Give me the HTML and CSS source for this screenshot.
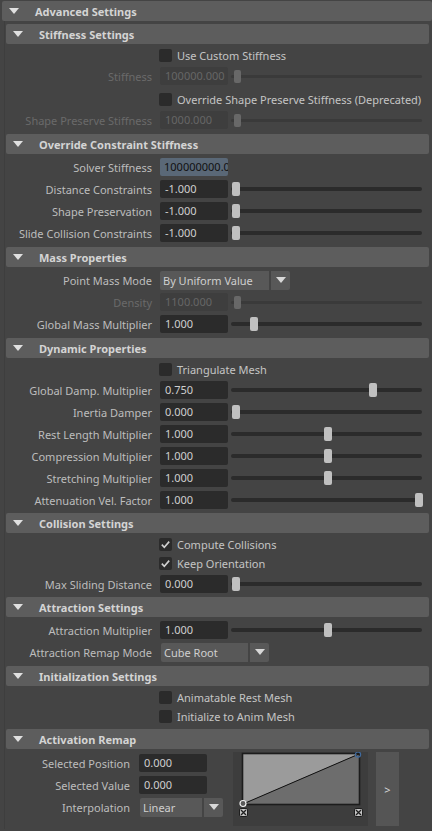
FILE: index.html
```html
<!DOCTYPE html>
<html>
<head>
<meta charset="utf-8">
<link rel="stylesheet" href="styles.css">
</head>
<body>
<div class="page">
  <div class="hdr hdr-top"><svg class="tri" width="10" height="6" viewBox="0 0 10 6"><polygon points="0,0 10,0 5,6" fill="#e0e0e0"/></svg><span>Advanced Settings</span></div>
  <div class="frame-body">

    <section class="sub">
      <div class="hdr"><svg class="tri" width="10" height="6" viewBox="0 0 10 6"><polygon points="0,0 10,0 5,6" fill="#e0e0e0"/></svg><span>Stiffness Settings</span></div>
      <div class="sub-body">
        <div class="row cb"><span class="cbox"></span><span class="cb-text">Use Custom Stiffness</span></div>
        <div class="row dis"><span class="label">Stiffness</span><span class="field">100000.000</span><div class="slider"><span class="handle" style="left:3px"></span></div></div>
        <div class="row cb gap2"><span class="cbox"></span><span class="cb-text">Override Shape Preserve Stiffness (Deprecated)</span></div>
        <div class="row dis"><span class="label">Shape Preserve Stiffness</span><span class="field">1000.000</span><div class="slider"><span class="handle" style="left:3px"></span></div></div>
      </div>
    </section>

    <section class="sub">
      <div class="hdr"><svg class="tri" width="10" height="6" viewBox="0 0 10 6"><polygon points="0,0 10,0 5,6" fill="#e0e0e0"/></svg><span>Override Constraint Stiffness</span></div>
      <div class="sub-body">
        <div class="row"><span class="label">Solver Stiffness</span><span class="field sel">100000000.0</span></div>
        <div class="row"><span class="label">Distance Constraints</span><span class="field">-1.000</span><div class="slider"><span class="handle" style="left:1px"></span></div></div>
        <div class="row"><span class="label">Shape Preservation</span><span class="field">-1.000</span><div class="slider"><span class="handle" style="left:1px"></span></div></div>
        <div class="row"><span class="label">Slide Collision Constraints</span><span class="field">-1.000</span><div class="slider"><span class="handle" style="left:1px"></span></div></div>
      </div>
    </section>

    <section class="sub">
      <div class="hdr"><svg class="tri" width="10" height="6" viewBox="0 0 10 6"><polygon points="0,0 10,0 5,6" fill="#e0e0e0"/></svg><span>Mass Properties</span></div>
      <div class="sub-body">
        <div class="row"><span class="label">Point Mass Mode</span><span class="drop w109">By Uniform Value</span><span class="drop-btn"><svg width="10" height="6" viewBox="0 0 10 6"><polygon points="0,0 10,0 5,6" fill="#d8d8d8"/></svg></span></div>
        <div class="row dis"><span class="label">Density</span><span class="field">1100.000</span><div class="slider"><span class="handle" style="left:3px"></span></div></div>
        <div class="row"><span class="label">Global Mass Multiplier</span><span class="field">1.000</span><div class="slider"><span class="handle" style="left:19px"></span></div></div>
      </div>
    </section>

    <section class="sub">
      <div class="hdr"><svg class="tri" width="10" height="6" viewBox="0 0 10 6"><polygon points="0,0 10,0 5,6" fill="#e0e0e0"/></svg><span>Dynamic Properties</span></div>
      <div class="sub-body tight">
        <div class="row cb"><span class="cbox"></span><span class="cb-text">Triangulate Mesh</span></div>
        <div class="row"><span class="label">Global Damp. Multiplier</span><span class="field">0.750</span><div class="slider"><span class="handle" style="left:138px"></span></div></div>
        <div class="row"><span class="label">Inertia Damper</span><span class="field">0.000</span><div class="slider"><span class="handle" style="left:1px"></span></div></div>
        <div class="row"><span class="label">Rest Length Multiplier</span><span class="field">1.000</span><div class="slider"><span class="handle" style="left:93px"></span></div></div>
        <div class="row"><span class="label">Compression Multiplier</span><span class="field">1.000</span><div class="slider"><span class="handle" style="left:93px"></span></div></div>
        <div class="row"><span class="label">Stretching Multiplier</span><span class="field">1.000</span><div class="slider"><span class="handle" style="left:93px"></span></div></div>
        <div class="row"><span class="label">Attenuation Vel. Factor</span><span class="field">1.000</span><div class="slider"><span class="handle" style="left:184px"></span></div></div>
      </div>
    </section>

    <section class="sub">
      <div class="hdr"><svg class="tri" width="10" height="6" viewBox="0 0 10 6"><polygon points="0,0 10,0 5,6" fill="#e0e0e0"/></svg><span>Collision Settings</span></div>
      <div class="sub-body tight">
        <div class="row cb"><span class="cbox"><svg width="13" height="13" viewBox="0 0 13 13"><path d="M2.8 6.6 L5.3 9.2 L10.2 3.6" fill="none" stroke="#d0d0d0" stroke-width="1.6"/></svg></span><span class="cb-text">Compute Collisions</span></div>
        <div class="row cb"><span class="cbox"><svg width="13" height="13" viewBox="0 0 13 13"><path d="M2.8 6.6 L5.3 9.2 L10.2 3.6" fill="none" stroke="#d0d0d0" stroke-width="1.6"/></svg></span><span class="cb-text">Keep Orientation</span></div>
        <div class="row"><span class="label">Max Sliding Distance</span><span class="field">0.000</span><div class="slider"><span class="handle" style="left:1px"></span></div></div>
      </div>
    </section>

    <section class="sub">
      <div class="hdr"><svg class="tri" width="10" height="6" viewBox="0 0 10 6"><polygon points="0,0 10,0 5,6" fill="#e0e0e0"/></svg><span>Attraction Settings</span></div>
      <div class="sub-body">
        <div class="row"><span class="label">Attraction Multiplier</span><span class="field">1.000</span><div class="slider"><span class="handle" style="left:93px"></span></div></div>
        <div class="row"><span class="label">Attraction Remap Mode</span><span class="drop w87">Cube Root</span><span class="drop-btn"><svg width="10" height="6" viewBox="0 0 10 6"><polygon points="0,0 10,0 5,6" fill="#d8d8d8"/></svg></span></div>
      </div>
    </section>

    <section class="sub">
      <div class="hdr"><svg class="tri" width="10" height="6" viewBox="0 0 10 6"><polygon points="0,0 10,0 5,6" fill="#e0e0e0"/></svg><span>Initialization Settings</span></div>
      <div class="sub-body">
        <div class="row cb"><span class="cbox"></span><span class="cb-text">Animatable Rest Mesh</span></div>
        <div class="row cb"><span class="cbox"></span><span class="cb-text">Initialize to Anim Mesh</span></div>
      </div>
    </section>

    <section class="sub">
      <div class="hdr"><svg class="tri" width="10" height="6" viewBox="0 0 10 6"><polygon points="0,0 10,0 5,6" fill="#e0e0e0"/></svg><span>Activation Remap</span></div>
      <div class="sub-body remap">
        <div class="remap-rows">
          <div class="row"><span class="label short">Selected Position</span><span class="field">0.000</span></div>
          <div class="row"><span class="label short">Selected Value</span><span class="field">0.000</span></div>
          <div class="row"><span class="label short">Interpolation</span><span class="drop w62">Linear</span><span class="drop-btn"><svg width="10" height="6" viewBox="0 0 10 6"><polygon points="0,0 10,0 5,6" fill="#d8d8d8"/></svg></span></div>
        </div>
        <div class="ramp">
          <svg width="135" height="74" viewBox="0 0 135 74">
            <rect x="0" y="0" width="135" height="74" fill="#3d3d3d"/>
            <polygon points="10,52 126,2 10,2" fill="#9b9b9b"/>
            <polygon points="10,52 126,2 126,52" fill="#6d6d6d"/>
            <rect x="9.5" y="1.5" width="117" height="51" fill="none" stroke="#1c1c1c" stroke-width="1.6"/>
            <line x1="10" y1="52" x2="126" y2="2" stroke="#111" stroke-width="1"/>
            <circle cx="10" cy="51.5" r="3" fill="#5a5a5a" stroke="#f0f0f0" stroke-width="1.2"/>
            <circle cx="125" cy="2.5" r="2.6" fill="none" stroke="#3f6a9e" stroke-width="1.2"/>
            <rect x="6.5" y="56.5" width="8" height="8" rx="1.5" fill="#c4c4c4" stroke="#1e1e1e"/>
            <path d="M8 58 L13 63 M13 58 L8 63" stroke="#1e1e1e" stroke-width="1.3"/>
            <rect x="121.5" y="56.5" width="8" height="8" rx="1.5" fill="#c4c4c4" stroke="#1e1e1e"/>
            <path d="M123 58 L128 63 M128 58 L123 63" stroke="#1e1e1e" stroke-width="1.3"/>
          </svg>
        </div>
        <div class="ramp-btn">&gt;</div>
      </div>
    </section>

  </div>
</div>
</body>
</html>
```
FILE: styles.css
```css
* { box-sizing: border-box; }
html, body { margin: 0; padding: 0; background: #444444; }
body {
  width: 432px;
  height: 831px;
  overflow: hidden;
  font-family: "Noto Sans", "Open Sans", "DejaVu Sans", sans-serif;
  font-size: 11px;
  color: #bdbdbd;
}
.page { padding-top: 1px; }

.hdr {
  height: 20px;
  background: #5d5d5d;
  border-radius: 2px;
  display: flex;
  align-items: center;
  padding-left: 7px;
  color: #d4d4d4;
  font-weight: bold;
  font-size: 11px;
}
.hdr .tri { flex: none; margin-right: 16px; }
.hdr-top { margin-left: 2px; }

.frame-body {
  margin-left: 4px;
  border-left: 1px solid #3e3e3e;
  padding: 3px 3px 0 1px;
}

.sub-body { padding: 2px 0 3px 0; }
.sub-body.tight { padding-bottom: 2px; }

.row {
  display: flex;
  align-items: center;
  height: 22px;
}
.row.cb { height: 19px; }
.row.gap2 { margin-top: 3px; }

.label {
  flex: none;
  width: 146px;
  text-align: right;
  white-space: nowrap;
}
.label.short { width: 124px; }

.field {
  flex: none;
  margin-left: 8px;
  width: 68px;
  height: 18px;
  line-height: 18px;
  background: #2b2b2b;
  border-radius: 2px;
  padding-left: 5px;
  color: #cfcfcf;
  overflow: hidden;
  white-space: nowrap;
}
.label.short + .field { margin-left: 9px; }
.field.sel { background: #5a6877; color: #111; padding-left: 4px; }

.dis .label { color: #6a6a6a; }
.dis .field { background: #3e3e3e; color: #666666; }

.slider {
  flex: none;
  position: relative;
  margin-left: 3px;
  width: 191px;
  height: 14px;
}
.slider::before {
  content: "";
  position: absolute;
  left: 0;
  right: 0;
  top: 5px;
  height: 4px;
  border-radius: 2px;
  background: #2b2b2b;
}
.handle {
  position: absolute;
  top: 0;
  width: 8px;
  height: 14px;
  border-radius: 2px;
  background: #c0c0c0;
}
.dis .slider::before { top: 6px; height: 3px; background: #3a3a3a; }
.dis .handle { width: 7px; top: 1px; height: 13px; background: #686868; }

.cbox {
  flex: none;
  margin-left: 153px;
  width: 13px;
  height: 13px;
  background: #2b2b2b;
  border-radius: 2px;
  display: flex;
}
.cb-text { margin-left: 5px; color: #c4c4c4; white-space: nowrap; }

.drop {
  flex: none;
  margin-left: 8px;
  height: 19px;
  line-height: 19px;
  background: #585858;
  border-radius: 2px 0 0 2px;
  padding-left: 3px;
  color: #cfcfcf;
  white-space: nowrap;
  overflow: hidden;
}
.label.short + .drop { margin-left: 10px; }
.w109 { width: 109px; }
.w87 { width: 87px; margin-left: 9px; }
.w62 { width: 62px; }
.drop-btn {
  flex: none;
  margin-left: 2px;
  width: 19px;
  height: 19px;
  background: #585858;
  border-radius: 0 2px 2px 0;
  display: flex;
  align-items: center;
  justify-content: center;
}

.remap {
  display: flex;
  align-items: flex-start;
  padding-top: 3px;
}
.remap-rows { flex: none; width: 227px; }
.ramp { flex: none; width: 135px; height: 74px; }
.ramp svg { display: block; }
.ramp-btn {
  flex: none;
  margin-left: 8px;
  width: 23px;
  height: 74px;
  background: #555555;
  color: #d8d8d8;
  font-size: 11px;
  display: flex;
  align-items: center;
  justify-content: center;
}
```
